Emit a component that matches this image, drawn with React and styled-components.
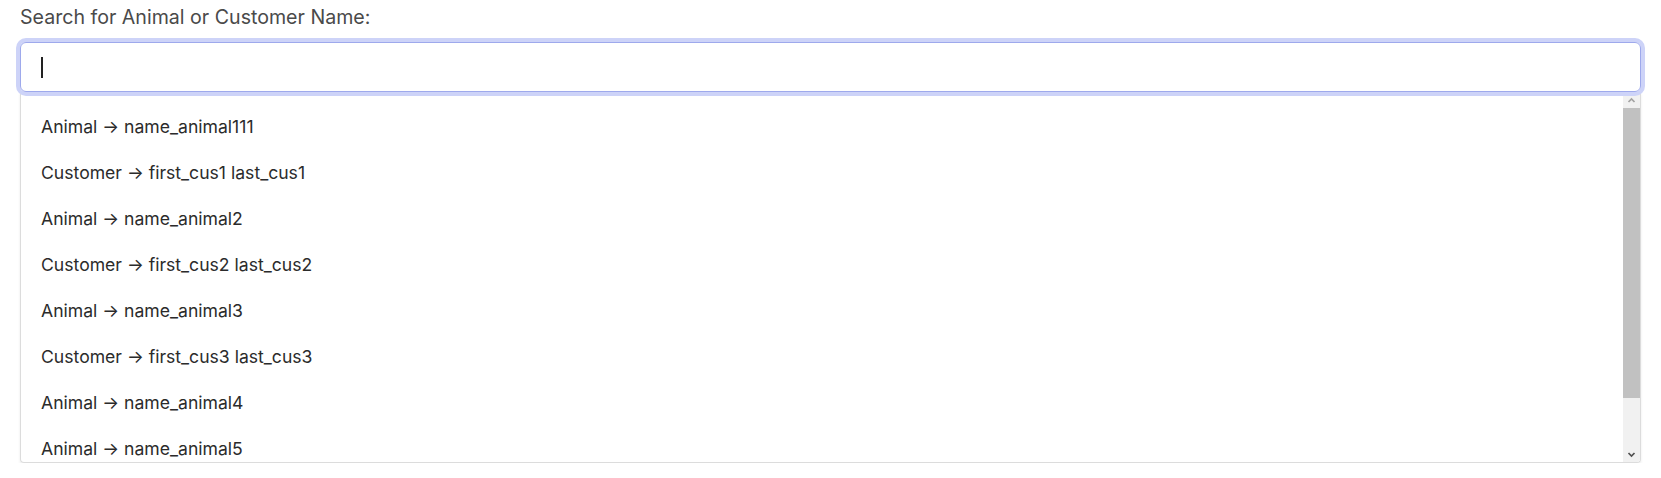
import React from "react";
import styled, { createGlobalStyle } from "styled-components";

const Global = createGlobalStyle`
  html, body { margin: 0; padding: 0; background: #fff; }
  body { font-family: Inter, "Noto Sans", sans-serif; }
`;

const Page = styled.div`
  padding: 5px 20px 0 20px;
  width: 1621px;
`;

const Label = styled.label`
  display: block;
  font-size: 19.6px;
  color: #4a4a4a;
  line-height: 24px;
  margin-bottom: 13px;
`;

const Input = styled.div`
  box-sizing: border-box;
  height: 50px;
  border: 1px solid #9ea9ec;
  border-radius: 6px;
  box-shadow: 0 0 0 4px #cdd3f8;
  display: flex;
  align-items: center;
  padding: 0 20px;
  position: relative;
  z-index: 1;
`;

const Caret = styled.span`
  width: 2px;
  height: 21px;
  background: #222;
`;

const Dropdown = styled.div`
  box-sizing: border-box;
  height: 371px;
  display: flex;
  border: 1px solid #dcdcdc;
  border-top: none;
  border-radius: 0 0 4px 4px;
  box-shadow: 0 2px 3px rgba(0, 0, 0, 0.08);
  overflow: hidden;
`;

const List = styled.ul`
  flex: 1;
  list-style: none;
  margin: 0;
  padding: 11px 0 9px 0;
  overflow: hidden;
`;

const Item = styled.li`
  height: 46px;
  display: flex;
  align-items: center;
  padding: 0 20px;
  font-size: 17.6px;
  color: #2b2b2b;
`;

const Scrollbar = styled.div`
  width: 17px;
  background: #f1f1f1;
  display: flex;
  flex-direction: column;
`;

const ScrollButton = styled.div`
  height: 16px;
  display: flex;
  align-items: center;
  justify-content: center;
`;

const Track = styled.div`
  flex: 1;
  display: flex;
  flex-direction: column;
`;

const Thumb = styled.div`
  height: 290px;
  background: #c1c1c1;
`;

const Chevron = ({ dir, color }) => (
  <svg width="9" height="9" viewBox="0 0 9 9">
    <path
      d={dir === "up" ? "M1.5 6 L4.5 3 L7.5 6" : "M1.5 3 L4.5 6 L7.5 3"}
      fill="none"
      stroke={color}
      strokeWidth="1.7"
    />
  </svg>
);

const items = [
  "Animal → name_animal111",
  "Customer → first_cus1 last_cus1",
  "Animal → name_animal2",
  "Customer → first_cus2 last_cus2",
  "Animal → name_animal3",
  "Customer → first_cus3 last_cus3",
  "Animal → name_animal4",
  "Animal → name_animal5",
  "Customer → first_cus4 last_cus4",
];

export default function App() {
  return (
    <Page>
      <Global />
      <Label>Search for Animal or Customer Name:</Label>
      <Input>
        <Caret />
      </Input>
      <Dropdown>
        <List>
          {items.map((t) => (
            <Item key={t}>{t}</Item>
          ))}
        </List>
        <Scrollbar>
          <ScrollButton>
            <Chevron dir="up" color="#a3a3a3" />
          </ScrollButton>
          <Track>
            <Thumb />
          </Track>
          <ScrollButton>
            <Chevron dir="down" color="#505050" />
          </ScrollButton>
        </Scrollbar>
      </Dropdown>
    </Page>
  );
}
